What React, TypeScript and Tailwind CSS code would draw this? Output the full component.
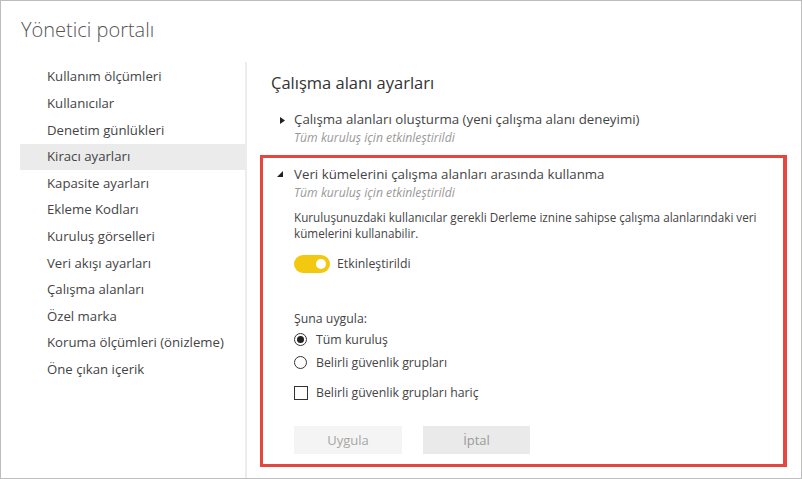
import React from "react";

const menu = [
  "Kullanım ölçümleri",
  "Kullanıcılar",
  "Denetim günlükleri",
  "Kiracı ayarları",
  "Kapasite ayarları",
  "Ekleme Kodları",
  "Kuruluş görselleri",
  "Veri akışı ayarları",
  "Çalışma alanları",
  "Özel marka",
  "Koruma ölçümleri (önizleme)",
  "Öne çıkan içerik",
];

function Radio({ checked, label }: { checked?: boolean; label: string }) {
  return (
    <label className="flex h-[23px] items-center gap-[9px]">
      <span className="flex h-[13px] w-[13px] items-center justify-center rounded-full border border-[#333]">
        {checked && <span className="h-[7px] w-[7px] rounded-full bg-[#222]" />}
      </span>
      <span>{label}</span>
    </label>
  );
}

export default function App() {
  return (
    <div
      className="flex h-[479px] w-[802px] flex-col border border-[#bdbdbd] bg-white text-[#444]"
      style={{ fontFamily: '"Open Sans", "Noto Sans", sans-serif' }}
    >
      <h1 className="pl-[20px] pt-[15px] text-[20px] font-light leading-[28px] text-[#555]">
        Yönetici portalı
      </h1>

      <div className="mt-[18px] flex flex-1">
        <nav className="ml-[19px] w-[225px] pt-[2px] text-[13.2px]">
          {menu.map((item) => (
            <div
              key={item}
              className={
                "flex h-[26.6px] items-center pl-[27px] " +
                (item === "Kiracı ayarları" ? "bg-[#ebebeb]" : "")
              }
            >
              {item}
            </div>
          ))}
        </nav>

        <div className="w-[2px] bg-[#ececec]" />

        <main className="flex-1 pl-[13px]">
          <h2 className="ml-[11px] mt-[10px] text-[16.5px] leading-[21px] text-[#333]">
            Çalışma alanı ayarları
          </h2>

          <div className="ml-[20px] mt-[17px] flex">
            <div className="w-[14px] pt-[7px]">
              <svg width="5" height="7" viewBox="0 0 5 7">
                <path d="M0 0 L5 3.5 L0 7 Z" fill="#222" />
              </svg>
            </div>
            <div>
              <div className="text-[13.3px] leading-[19px] text-[#444]">
                Çalışma alanları oluşturma (yeni çalışma alanı deneyimi)
              </div>
              <div className="text-[12.2px] italic leading-[17px] text-[#999]">
                Tüm kuruluş için etkinleştirildi
              </div>
            </div>
          </div>

          <div className="mt-[9px] w-[527px] border-[3px] border-r-4 border-[#e6463d] pb-[10px] pl-[14px] pt-[7px]">
            <div className="flex">
              <div className="w-[17px] pt-[6px]">
                <svg width="6" height="6" viewBox="0 0 6 6">
                  <path d="M6 0 L6 6 L0 6 Z" fill="#222" />
                </svg>
              </div>
              <div>
                <div className="text-[13.3px] leading-[19px] text-[#444]">
                  Veri kümelerini çalışma alanları arasında kullanma
                </div>
                <div className="text-[12.2px] italic leading-[17px] text-[#999]">
                  Tüm kuruluş için etkinleştirildi
                </div>

                <p className="mt-[9px] w-[480px] text-[11.7px] leading-[15.5px]">
                  Kuruluşunuzdaki kullanıcılar gerekli Derleme iznine sahipse çalışma alanlarındaki veri
                  kümelerini kullanabilir.
                </p>

                <div className="mt-[14px] flex items-center gap-[7px]">
                  <span className="flex h-[18px] w-[36px] items-center justify-end rounded-full bg-[#f2c811] pr-[4px]">
                    <span className="h-[10px] w-[10px] rounded-full bg-white" />
                  </span>
                  <span className="text-[12.3px]">Etkinleştirildi</span>
                </div>

                <div className="mt-[38px] text-[12.3px] leading-[16px]">Şuna uygula:</div>
                <div className="mt-[1px] text-[12.3px]">
                  <Radio checked label="Tüm kuruluş" />
                  <Radio label="Belirli güvenlik grupları" />
                </div>

                <label className="mt-[7px] flex h-[23px] items-center gap-[8px] text-[12.3px]">
                  <span className="h-[14px] w-[14px] border border-[#333]" />
                  <span>Belirli güvenlik grupları hariç</span>
                </label>

                <div className="mt-[22px] flex gap-[21px] text-[13px]">
                  <button className="h-[28px] w-[108px] bg-[#f4f4f4] text-[#a6a6a6]">Uygula</button>
                  <button className="h-[28px] w-[107px] bg-[#eaeaea] text-[#9a9a9a]">İptal</button>
                </div>
              </div>
            </div>
          </div>
        </main>
      </div>
    </div>
  );
}
